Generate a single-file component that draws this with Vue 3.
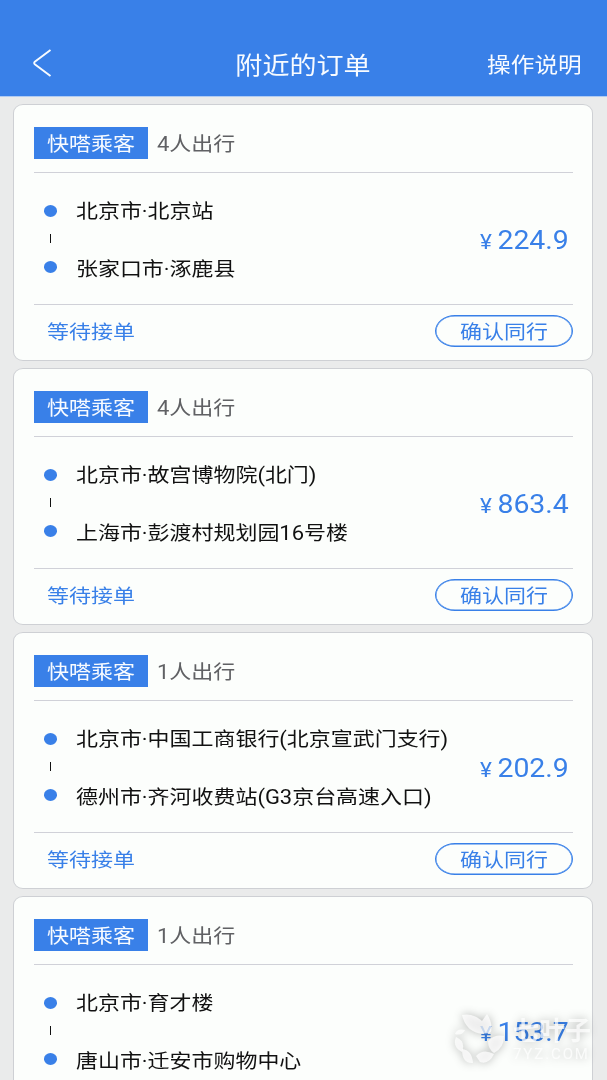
<script setup>
const orders = [
  { people: 4, from: '北京市·北京站', to: '张家口市·涿鹿县', price: '224.9' },
  { people: 4, from: '北京市·故宫博物院(北门)', to: '上海市·彭渡村规划园16号楼', price: '863.4' },
  { people: 1, from: '北京市·中国工商银行(北京宣武门支行)', to: '德州市·齐河收费站(G3京台高速入口)', price: '202.9' },
  { people: 1, from: '北京市·育才楼', to: '唐山市·迁安市购物中心', price: '153.7' }
]
</script>

<template>
  <div class="screen">
    <header class="bar">
      <svg class="back" width="20" height="30" viewBox="0 0 20 30"><path d="M18.5 2 L2.8 13.8 Q1.5 15 2.8 16.2 L18.5 28" /></svg>
      <h1 class="title"><span class="wide">附近的订单</span></h1>
      <span class="action"><span class="wide">操作说明</span></span>
    </header>
    <main class="list">
      <article v-for="(o, i) in orders" :key="i" class="card">
        <div class="head">
          <span class="badge"><span class="wide">快嗒乘客</span></span>
          <span class="people wide">{{ o.people }}人出行</span>
        </div>
        <div class="route">
          <div class="marks"><i class="dot"></i><i class="tick"></i><i class="dot"></i></div>
          <div class="places">
            <span class="wide">{{ o.from }}</span>
            <span class="wide">{{ o.to }}</span>
          </div>
          <div class="price wide"><span class="yen">¥</span>{{ o.price }}</div>
        </div>
        <div class="foot">
          <span class="state wide">等待接单</span>
          <button class="join"><span class="wide">确认同行</span></button>
        </div>
      </article>
    </main>
    <div class="mark">
      <svg class="leaf" width="56" height="52" viewBox="0 0 56 52">
        <path d="M9 1 C17 -1 25 3 29 7 L34 0 Q40 9 38 18 C32 21 14 22 9 1Z" />
        <path d="M35 27 Q42 20 51 22 Q51 34 41 39 Q35 35 35 27Z" />
        <path d="M23 42 Q30 34 41 40 Q36 51 27 48Z" />
        <path d="M9 35 Q19 36 20 49 Q9 50 9 35Z" />
        <path d="M3 23 Q13 27 9 38 Q-1 33 3 23Z" />
        <path d="M2 20 Q4 14 12 16 Q9 22 2 20Z" />
      </svg>
      <div class="brand"><b>七叶子</b><small>7YZ.COM</small></div>
    </div>
  </div>
</template>

<style>
html, body { margin: 0; overflow: hidden; }
</style>

<style scoped>
.screen {
  position: relative;
  width: 607px;
  height: 1080px;
  overflow: hidden;
  background: #eaebeb;
  color: #111;
  font-family: Roboto, "Noto Sans CJK SC", sans-serif;
  font-size: 19.5px;
}
.wide { display: block; white-space: nowrap; transform: scaleX(1.128); transform-origin: left center; }
.bar {
  box-sizing: border-box;
  height: 97px;
  padding: 29px 25px 0 32px;
  display: grid;
  grid-template-columns: 87px 1fr 95px;
  align-items: center;
  background: #3980e8;
  border-bottom: 1px solid #b0cbf3;
  color: #f8fbff;
}
.back { fill: none; stroke: #f8fbff; stroke-width: 1.9; }
.title { margin: 2px 0 0; font-size: 24px; font-weight: 400; display: flex; justify-content: center; }
.title .wide { transform-origin: center; }
.action { font-size: 21px; }
.list { padding: 7px 14px 7px 13px; display: flex; flex-direction: column; gap: 7px; }
.card {
  box-sizing: border-box;
  flex: none;
  height: 257px;
  padding: 0 19px 0 20px;
  border: 1px solid #ced0d4;
  border-radius: 10px / 9px;
  background: #fcfefc;
}
.head {
  box-sizing: border-box;
  height: 68px;
  padding-top: 9px;
  display: flex;
  align-items: center;
  border-bottom: 1px solid #d0d1d8;
}
.badge {
  box-sizing: border-box;
  width: 114px;
  height: 32px;
  padding-left: 13px;
  background: #3980e8;
  color: #f8fbff;
  line-height: 36px;
}
.people { margin: -1px 0 0 9px; color: #606164; }
.route {
  box-sizing: border-box;
  height: 132px;
  display: flex;
  align-items: center;
  border-bottom: 1px solid #d0d1d8;
}
.marks {
  width: 13px;
  margin: 0 18.5px 0 10px;
  display: flex;
  flex-direction: column;
  align-items: center;
  gap: 17.5px;
}
.dot { width: 13.5px; height: 12px; border-radius: 50%; background: #3980e8; }
.tick { width: 1px; height: 9px; background: #111; }
.places { flex: 1; display: flex; flex-direction: column; gap: 28px; line-height: 30px; padding-top: 4px; }
.places .wide { transform: scaleX(1.126); }
.price.wide { transform-origin: right center; }
.price { display: flex; align-items: baseline; margin: 3px 4px 0 0; font-size: 25.2px; color: #3980e8; }
.yen { font-size: 20px; margin-right: 5px; }
.foot {
  height: 52px;
  padding-left: 13px;
  display: flex;
  align-items: center;
  justify-content: space-between;
  color: #3980e8;
}
.state { margin-top: -2px; }
.join {
  box-sizing: border-box;
  width: 138px;
  height: 32px;
  padding: 3px 0 0 24px;
  border: 1.6px solid #3980e8;
  border-radius: 20px / 16px;
  box-shadow: inset 0 0 0 .5px #3980e8;
  background: none;
  color: #3980e8;
  font: inherit;
  line-height: 28px;
  text-align: left;
}
.join .wide { width: 78px; }
.mark {
  position: absolute;
  left: 453px;
  top: 1014px;
  display: flex;
  color: rgba(255, 255, 255, .72);
  filter: drop-shadow(0 0 5px rgba(0, 0, 0, .38));
}
.leaf { fill: rgba(255, 255, 255, .72); }
.brand { margin-left: 4px; width: 84px; }
.brand b { display: block; font-size: 26px; line-height: 34px; white-space: nowrap; }
.brand small { display: block; font-size: 15px; line-height: 13px; letter-spacing: 1.9px; }
</style>
